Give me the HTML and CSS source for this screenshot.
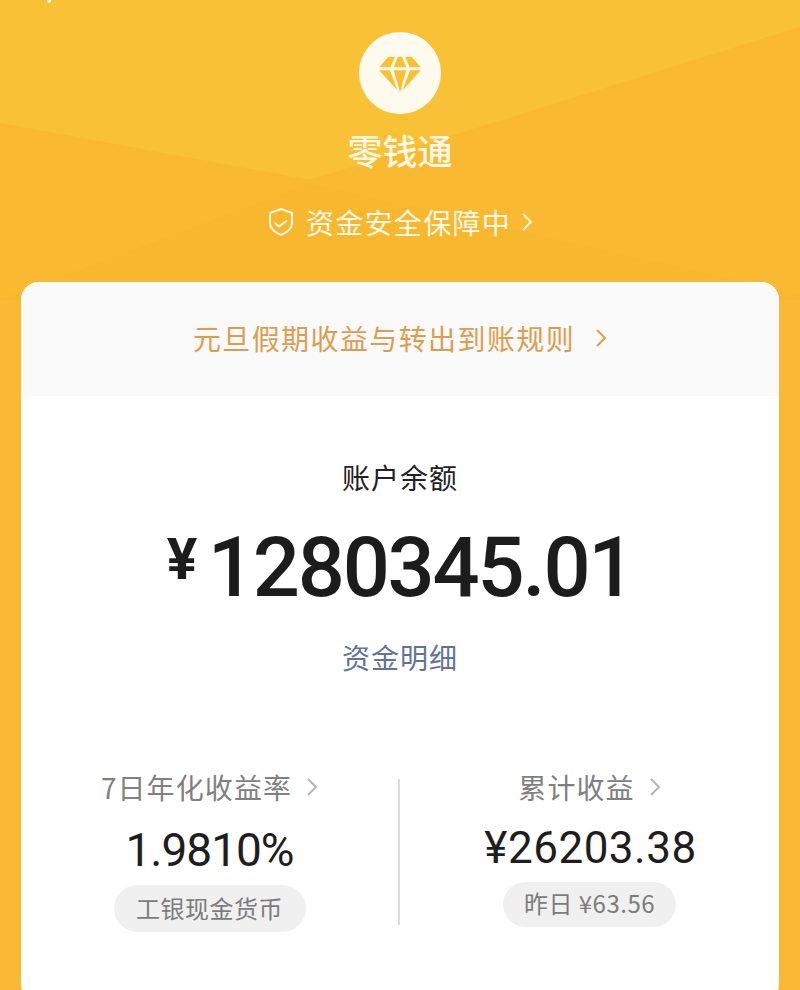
FILE: index.html
```html
<!DOCTYPE html>
<html lang="zh-CN">
<head>
   <meta charset="UTF-8">
   <meta name="viewport" content="width=device-width, initial-scale=1.0">
   <title>零钱通</title>
   <link rel="stylesheet" href="styles.css">
</head>
<body>
   <svg class="bg-shapes" width="800" height="990" viewBox="0 0 800 990">
      <rect width="800" height="300" fill="#f9b930"/>
      <polygon points="0,0 800,0 800,27 310,180 0,123" fill="#f8c136"/>
      <polygon points="310,184 800,295 800,300 0,300" fill="#f7b72e"/>
   </svg>
   <span class="back-tip"></span>

   <div id="container">
      <header class="top">
         <div class="logo">
            <svg width="46" height="43" viewBox="0 0 44 40">
               <path d="M11 2h6l-4 10H2z M20 2h4l4 10H16z M27 2h6l9 10H31z M2 15h10.500l7 19z M16 15h12l-6 21z M31.500 15H42L24.500 34z" fill="#f9c032"/>
            </svg>
         </div>
         <h1>零钱通</h1>
         <div class="safe">
            <svg width="28" height="30" viewBox="0 0 28 30" fill="none" stroke="#fff8e6" stroke-width="2">
               <path d="M14 2l11 4v10c0 6-5 9.500-11 12C8 25.500 3 22 3 16V6z"/>
               <path d="M8 16l4 3.500 8-6"/>
            </svg>
            <span>资金安全保障中</span>
            <svg class="arrow" width="12" height="20" viewBox="0 0 12 20" fill="none" stroke="#fff8e6" stroke-width="2">
               <path d="M2 2l8 8-8 8"/>
            </svg>
         </div>
      </header>

      <main class="card">
         <div class="notice">
            <span>元旦假期收益与转出到账规则</span>
            <svg width="12" height="20" viewBox="0 0 12 20" fill="none" stroke="#e09c4e" stroke-width="2">
               <path d="M2 2l8 8-8 8"/>
            </svg>
         </div>

         <section class="balance">
            <p class="balance-label">账户余额</p>
            <div class="balance-num"><span class="yen">¥</span>1280345.01</div>
            <p class="balance-link">资金明细</p>
         </section>

         <section class="stats">
            <div class="stat stat-left">
               <div class="stat-label">
                  <span>7日年化收益率</span>
                  <svg width="12" height="20" viewBox="0 0 12 20" fill="none" stroke="#b5b5b5" stroke-width="2">
                     <path d="M2 2l8 8-8 8"/>
                  </svg>
               </div>
               <div class="stat-num rate">1.9810%</div>
               <div class="chip chip-rate">工银现金货币</div>
            </div>
            <div class="divider"></div>
            <div class="stat stat-right">
               <div class="stat-label">
                  <span>累计收益</span>
                  <svg width="12" height="20" viewBox="0 0 12 20" fill="none" stroke="#b5b5b5" stroke-width="2">
                     <path d="M2 2l8 8-8 8"/>
                  </svg>
               </div>
               <div class="stat-num total">¥26203.38</div>
               <div class="chip chip-total">昨日 ¥63.56</div>
            </div>
         </section>
      </main>
   </div>
</body>
</html>
```

FILE: styles.css
```css
html, body {
   margin: 0;
   height: 990px;
   overflow: hidden;
}

body {
   position: relative;
   background: #fab935;
   font-family: "Noto Sans CJK SC", "Noto Sans", sans-serif;
}

p, h1 {
   margin: 0;
}

.bg-shapes {
   position: absolute;
   top: 0;
   left: 0;
}

.back-tip {
   position: absolute;
   top: 0;
   left: 47px;
   width: 4px;
   height: 3px;
   background: #fff8e0;
   border-radius: 0 0 3px 3px;
}

#container {
   position: relative;
   display: flex;
   flex-direction: column;
   align-items: center;
   padding-top: 32px;
}

.top {
   display: flex;
   flex-direction: column;
   align-items: center;
   height: 250px;
}

.logo {
   width: 82px;
   height: 82px;
   border-radius: 50%;
   background: #fffaee;
   display: flex;
   justify-content: center;
   align-items: center;
}

.logo svg {
   margin-top: 5px;
}

h1 {
   margin-top: 10px;
   color: #fff8e6;
   font-size: 35px;
   line-height: 52px;
   font-weight: 500;
}

.safe {
   margin-top: 26px;
   display: flex;
   align-items: center;
   color: #fff8e6;
   font-size: 28px;
   line-height: 40px;
   letter-spacing: 1.300px;
}

.safe span {
   margin: 0 10px 0 11px;
}

.card {
   width: 758px;
   height: 720px;
   background: #fff;
   border-radius: 18px;
   overflow: hidden;
}

.notice {
   height: 111px;
   padding-bottom: 3px;
   background: #fafafa;
   display: flex;
   justify-content: center;
   align-items: center;
   gap: 20px;
   color: #e09c4e;
   font-size: 28px;
   letter-spacing: 1.400px;
}

.balance {
   display: flex;
   flex-direction: column;
   align-items: center;
   padding-top: 60px;
}

.balance-label {
   color: #222;
   font-size: 28px;
   line-height: 42px;
   letter-spacing: 1px;
}

.balance-num {
   display: flex;
   align-items: flex-start;
   margin-top: 20px;
   color: #1c1c1c;
   font-family: Roboto, sans-serif;
   font-weight: 500;
   font-size: 83px;
   line-height: 100px;
   letter-spacing: -2.200px;
}

.balance-num .yen {
   font-size: 57px;
   font-weight: 700;
   line-height: 84px;
   margin-right: 10.500px;
   letter-spacing: 0;
}

.balance-link {
   margin-top: 18px;
   color: #61739b;
   font-size: 28px;
   line-height: 42px;
   letter-spacing: 1px;
}

.stats {
   display: flex;
   margin-top: 89px;
}

.stat {
   display: flex;
   flex-direction: column;
   align-items: center;
}

.stat-left {
   width: 377px;
}

.stat-right {
   width: 379px;
}

.divider {
   width: 2px;
   height: 146px;
   margin-top: 12px;
   background: #ddd;
}

.stat-label {
   display: flex;
   align-items: center;
   gap: 14px;
   color: #808080;
   font-size: 28px;
   line-height: 40px;
   letter-spacing: 1.100px;
}

.stat-num {
   color: #1e1e1e;
   font-family: Roboto, sans-serif;
}

.rate {
   margin-top: 18px;
   font-size: 46px;
   line-height: 50px;
   letter-spacing: -1px;
}

.total {
   margin-top: 16px;
   padding-left: 2px;
   font-size: 44px;
   line-height: 50px;
   letter-spacing: 0.500px;
}

.chip {
   background: #f0f0f0;
   color: #7c7c7c;
   display: flex;
   justify-content: center;
   align-items: center;
   font-size: 24px;
}

.chip-rate {
   margin-top: 10px;
   width: 192px;
   height: 44px;
   padding-bottom: 3px;
   border-radius: 24px;
   letter-spacing: 0.500px;
}

.chip-total {
   margin-top: 9px;
   width: 173px;
   height: 41px;
   padding-bottom: 4px;
   border-radius: 23px;
   letter-spacing: 0.500px;
}
```
